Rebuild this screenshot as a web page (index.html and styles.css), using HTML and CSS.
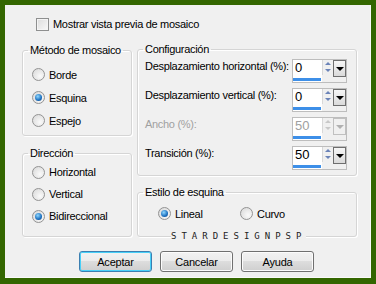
FILE: index.html
```html
<!DOCTYPE html>
<html lang="es">
<head>
    <meta charset="UTF-8">
    <title>Mosaico</title>
    <link rel="stylesheet" href="styles.css">
</head>
<body>
    <div class="dialog">
        <label class="check-row"><span class="checkbox"></span>Mostrar vista previa de mosaico</label>

        <div class="main">
            <div class="col-left">
                <fieldset class="group group-method">
                    <legend>Método de mosaico</legend>
                    <div class="group-body">
                        <div class="radio-row"><span class="radio"></span>Borde</div>
                        <div class="radio-row"><span class="radio on"></span>Esquina</div>
                        <div class="radio-row"><span class="radio"></span>Espejo</div>
                    </div>
                </fieldset>

                <fieldset class="group group-direction">
                    <legend>Dirección</legend>
                    <div class="group-body">
                        <div class="radio-row"><span class="radio"></span>Horizontal</div>
                        <div class="radio-row"><span class="radio"></span>Vertical</div>
                        <div class="radio-row"><span class="radio on"></span>Bidireccional</div>
                    </div>
                </fieldset>
            </div>

            <div class="col-right">
                <fieldset class="group group-config">
                    <legend>Configuración</legend>
                    <div class="group-body">
                        <div class="field-row">
                            <span class="field-label">Desplazamiento horizontal (%):</span>
                            <div class="spin">
                                <div class="spin-value">0<span class="spin-bar"></span></div>
                                <div class="spin-arrows"><span class="arrow-up"></span><span class="arrow-down"></span></div>
                                <div class="drop-btn"><span class="caret"></span></div>
                            </div>
                        </div>
                        <div class="field-row">
                            <span class="field-label">Desplazamiento vertical (%):</span>
                            <div class="spin">
                                <div class="spin-value">0<span class="spin-bar"></span></div>
                                <div class="spin-arrows"><span class="arrow-up"></span><span class="arrow-down"></span></div>
                                <div class="drop-btn"><span class="caret"></span></div>
                            </div>
                        </div>
                        <div class="field-row disabled">
                            <span class="field-label">Ancho (%):</span>
                            <div class="spin">
                                <div class="spin-value">50<span class="spin-bar"></span></div>
                                <div class="spin-arrows"><span class="arrow-up"></span><span class="arrow-down"></span></div>
                                <div class="drop-btn"><span class="caret"></span></div>
                            </div>
                        </div>
                        <div class="field-row">
                            <span class="field-label">Transición (%):</span>
                            <div class="spin">
                                <div class="spin-value">50<span class="spin-bar"></span></div>
                                <div class="spin-arrows"><span class="arrow-up"></span><span class="arrow-down"></span></div>
                                <div class="drop-btn"><span class="caret"></span></div>
                            </div>
                        </div>
                    </div>
                </fieldset>

                <fieldset class="group group-corner">
                    <legend>Estilo de esquina</legend>
                    <div class="group-body">
                        <div class="radio-row first"><span class="radio on"></span>Lineal</div>
                        <div class="radio-row"><span class="radio"></span>Curvo</div>
                    </div>
                </fieldset>
            </div>
        </div>

        <div class="watermark">STARDESIGNPSP</div>

        <div class="button-group">
            <button class="default">Aceptar</button>
            <button>Cancelar</button>
            <button>Ayuda</button>
        </div>
    </div>
</body>
</html>
```

FILE: styles.css
```css
body {
    margin: 0;
    background-color: #336600;
    font-family: 'Liberation Sans', Arial, sans-serif;
    font-size: 11px;
    letter-spacing: -0.3px;
    color: #000;
}

.dialog {
    position: relative;
    margin: 5px;
    width: 366px;
    height: 273px;
    box-sizing: border-box;
    background-color: #f0f0f0;
    border-right: 1px solid #fafafa;
    border-bottom: 1px solid #fafafa;
    overflow: hidden;
}

.check-row {
    display: flex;
    align-items: center;
    gap: 4px;
    height: 13px;
    line-height: 13px;
    margin: 0 0 0 31px;
    padding-top: 13px;
}

.checkbox {
    width: 13px;
    height: 13px;
    box-sizing: border-box;
    border: 1px solid #8e8f8f;
    background: linear-gradient(135deg, #dcdcdc, #f8f8f8);
    box-shadow: inset 0 0 0 1px #f4f4f4;
}

.main {
    display: grid;
    grid-template-columns: 110px 220px;
    column-gap: 5px;
    margin: 12px 0 0 17px;
}

.col-left {
    display: flex;
    flex-direction: column;
    gap: 11px;
    padding-top: 1px;
}

.col-right {
    display: flex;
    flex-direction: column;
    gap: 10px;
}

.group {
    margin: 0;
    padding: 0;
    box-sizing: border-box;
    min-width: 0;
    border: 1px solid #d5d5d5;
    border-radius: 3px;
    box-shadow: inset 1px 1px 0 #fff, 1px 1px 0 #fff;
}

.group legend {
    margin-left: 5px;
    padding: 0 2px;
    line-height: 13px;
}

.group-method { height: 92px; }
.group-direction { height: 90px; }
.group-config { height: 133px; }
.group-corner { height: 51px; }

.group-method .group-body { padding: 6px 0 0 9px; }
.group-direction .group-body { padding: 1px 0 0 9px; }
.group-config .group-body { padding: 3px 9px 0 7px; }
.group-corner .group-body { padding: 3px 0 0 20px; display: flex; }

.radio-row {
    display: flex;
    align-items: center;
    gap: 4px;
    height: 23px;
}

.group-direction .radio-row { height: 22px; }
.group-corner .radio-row.first { width: 82px; }

.radio {
    position: relative;
    width: 13px;
    height: 13px;
    box-sizing: border-box;
    border: 1px solid #939393;
    border-radius: 50%;
    background: radial-gradient(circle at 65% 65%, #fafafa, #d6d6d6);
}

.radio.on::after {
    content: '';
    position: absolute;
    left: 2px;
    top: 2px;
    width: 7px;
    height: 7px;
    border-radius: 50%;
    background: radial-gradient(circle at 40% 35%, #8fd8ff, #1b6fbf 60%, #0e3f7a);
}

.field-row {
    display: flex;
    justify-content: space-between;
    height: 24px;
    margin-bottom: 5px;
}

.field-label {
    line-height: 13px;
    padding-top: 1px;
}

.disabled .field-label,
.disabled .spin-value {
    color: #a0a0a0;
}

.spin {
    display: flex;
    width: 55px;
    height: 24px;
    box-sizing: border-box;
    border: 1px solid #bdbdbd;
    background-color: #f0f0f0;
}

.spin-value {
    display: flex;
    flex-direction: column;
    justify-content: space-between;
    width: 29px;
    box-sizing: border-box;
    padding-left: 2px;
    background-color: #fff;
    font-size: 13px;
    letter-spacing: 0;
    line-height: 15px;
}

.spin-bar {
    height: 3px;
    margin: 0 1px 1px -2px;
    background-color: #3d8fe8;
}

.spin-arrows {
    display: flex;
    flex-direction: column;
    align-items: center;
    justify-content: space-between;
    width: 11px;
    height: 15px;
    box-sizing: border-box;
    padding: 2px 0 3px;
    border-left: 1px solid #d8d8d8;
}

.arrow-up {
    border-left: 3px solid transparent;
    border-right: 3px solid transparent;
    border-bottom: 3px solid #6b83b8;
}

.arrow-down {
    border-left: 3px solid transparent;
    border-right: 3px solid transparent;
    border-top: 3px solid #6b83b8;
}

.drop-btn {
    display: flex;
    align-items: center;
    justify-content: center;
    width: 13px;
    height: 17px;
    box-sizing: border-box;
    border: 1px solid #6e6e6e;
    background: linear-gradient(#f6f6f6, #dadada);
}

.caret {
    border-left: 4px solid transparent;
    border-right: 4px solid transparent;
    border-top: 4px solid #000;
}

.disabled .arrow-up { border-bottom-color: #c8c8c8; }
.disabled .arrow-down { border-top-color: #c8c8c8; }
.disabled .drop-btn { border-color: #c0c0c0; background: #f0f0f0; }
.disabled .caret { border-top-color: #b0b0b0; }

.watermark {
    position: absolute;
    left: 166px;
    top: 227px;
    font-family: 'DejaVu Sans Mono', monospace;
    font-size: 9px;
    letter-spacing: 5px;
    line-height: 8px;
    color: #222;
    background-color: #f0f0f0;
}

.button-group {
    display: flex;
    gap: 8px;
    margin: 14px 0 0 74px;
}

button {
    width: 73px;
    height: 21px;
    padding: 0;
    font-family: 'Liberation Sans', Arial, sans-serif;
    font-size: 11px;
    letter-spacing: -0.2px;
    color: #000;
    border: 1px solid #707070;
    border-radius: 3px;
    background: linear-gradient(#f2f2f2 0%, #ebebeb 50%, #dddddd 50%, #cfcfcf 100%);
    box-shadow: inset 0 0 0 1px #fcfcfc;
}

button.default {
    border-color: #3c7fb1;
    box-shadow: inset 0 0 0 1px #48d0f8;
}
```
